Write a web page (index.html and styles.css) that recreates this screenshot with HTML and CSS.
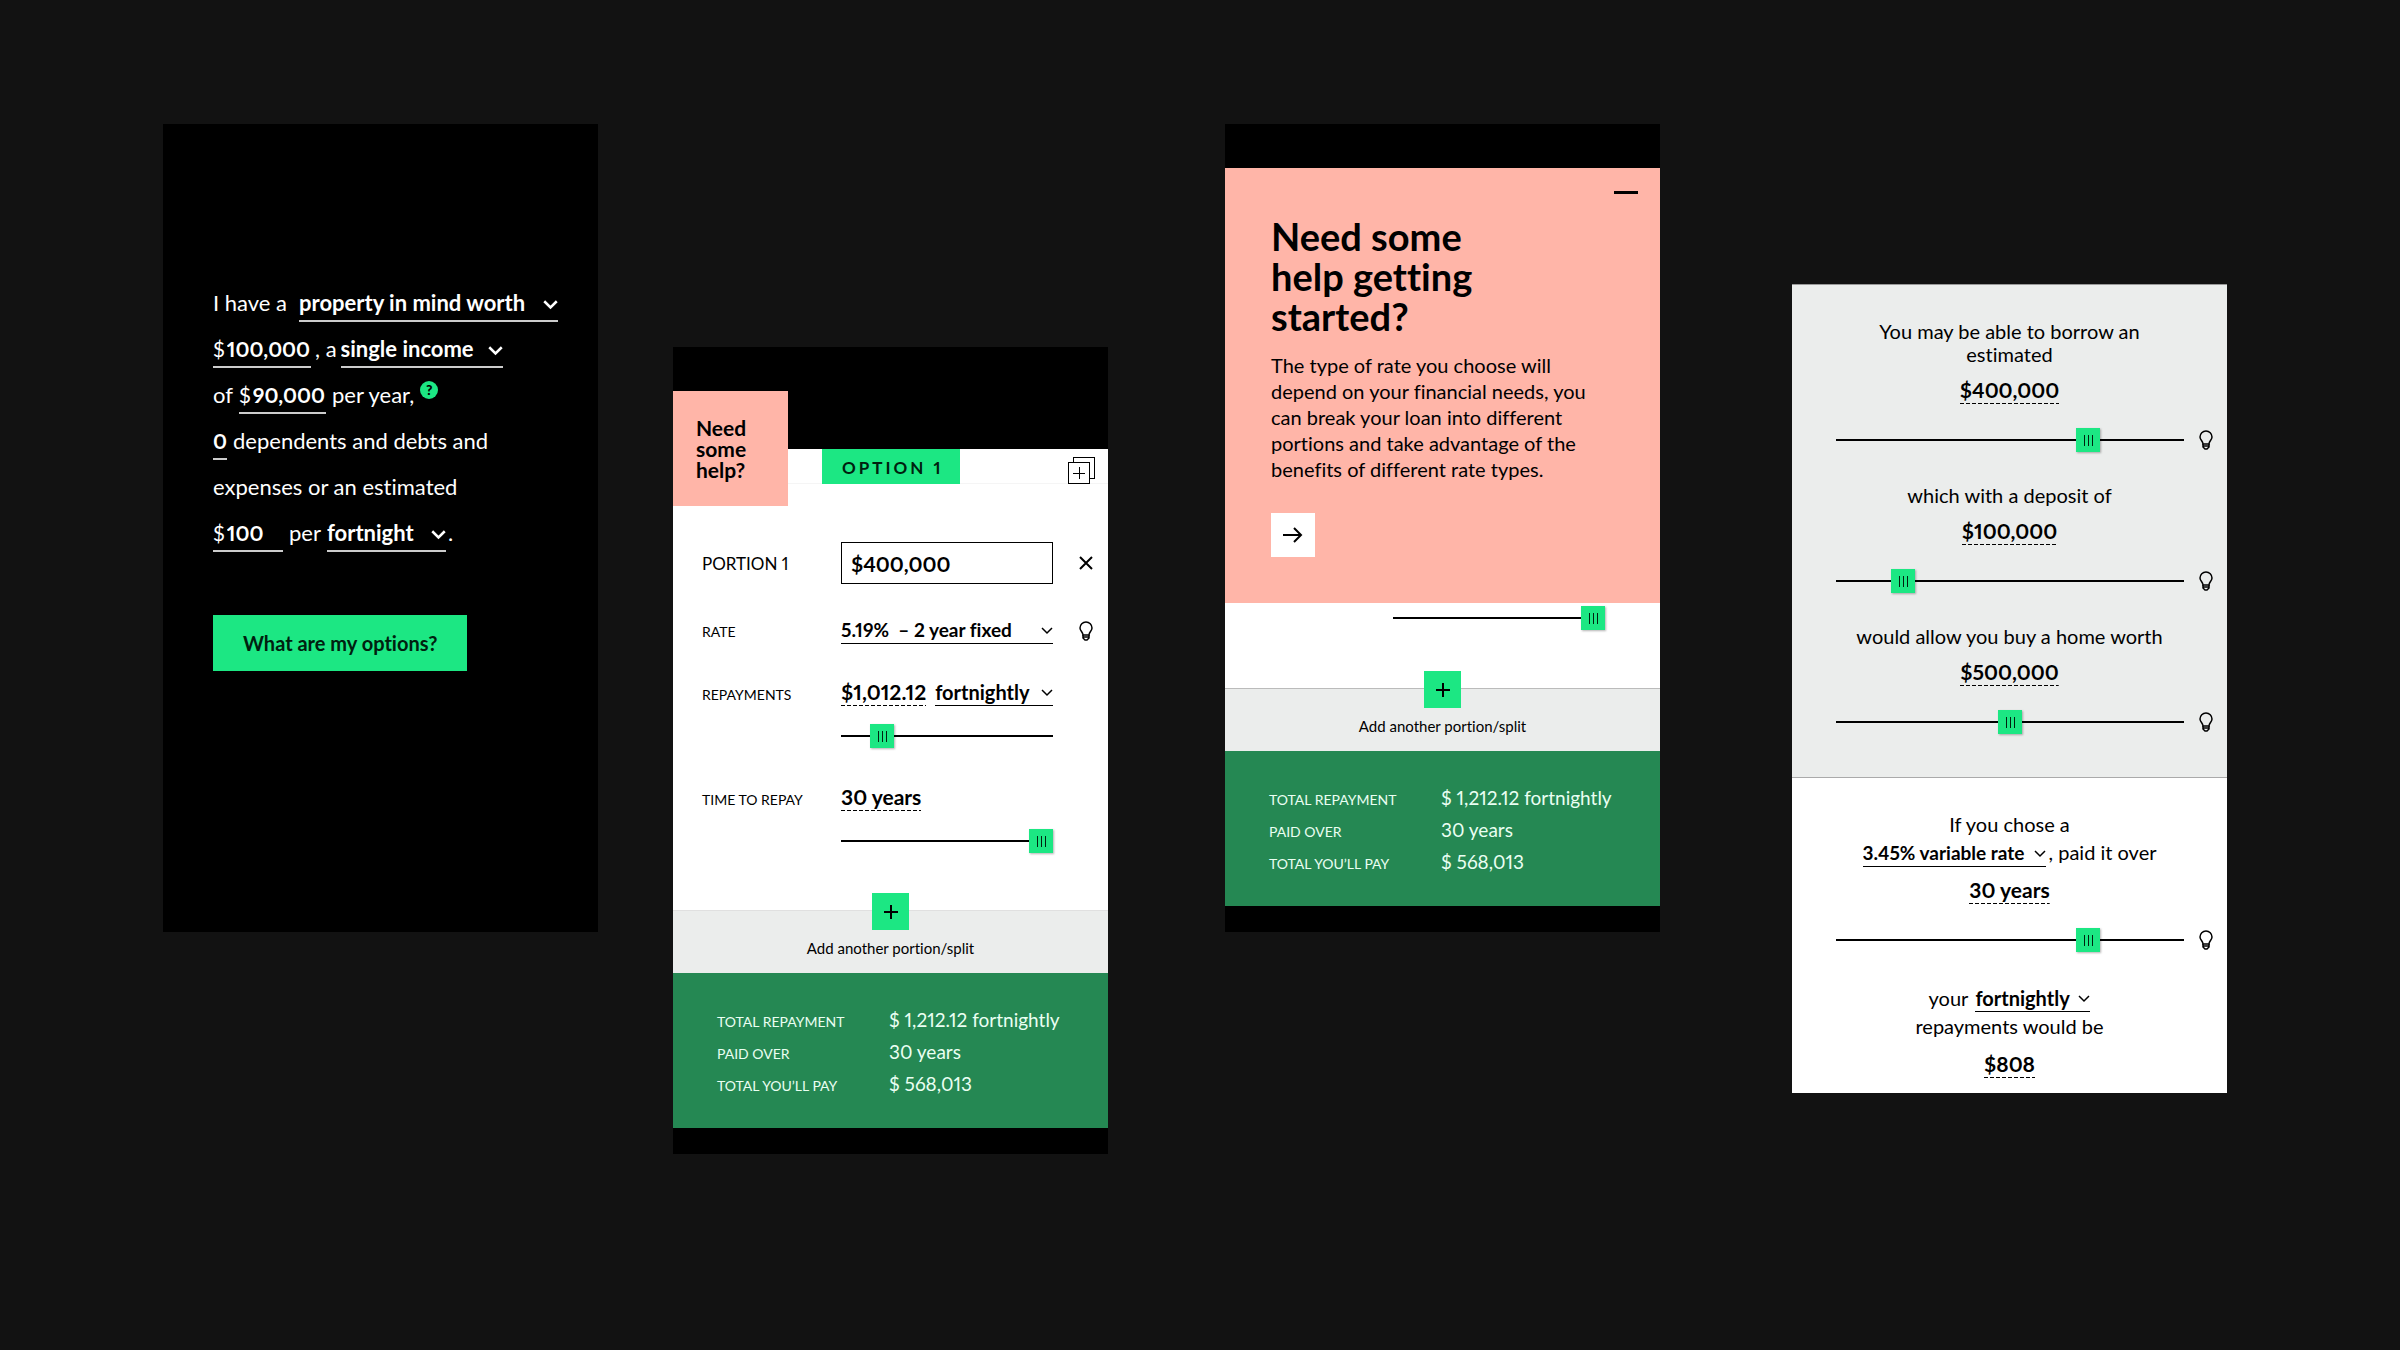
FILE: index.html
```html
<!DOCTYPE html>
<html lang="en">
<head>
    <title>Home loan calculator</title>
    <meta charset="utf-8">
    <meta name="viewport" content="width=device-width, initial-scale=1">
    <link rel="stylesheet" href="styles.css">
</head>
<body>
    <!-- shared icons -->
    <svg class="sprite" aria-hidden="true">
        <symbol id="chevron" viewBox="0 0 12 8"><path d="M1 1l5 5 5-5"/></symbol>
        <symbol id="bulb" viewBox="0 0 14 20">
            <path d="M4 14c0-3-3-4-3-7a6 6 0 0 1 12 0c0 3-3 4-3 7z"/>
            <path d="M4 16h6M4 14v3l2 2h2l2-2v-3"/>
        </symbol>
        <symbol id="plus" viewBox="0 0 16 16"><path d="M8 1v14M1 8h14"/></symbol>
    </svg>

    <main class="board">
        <form class="phone intro">
            <div class="line">
                <label for="goal">I have a</label>
                <span class="pick goal">
                    <select id="goal"><option>property in mind worth</option></select>
                    <svg class="chevron"><use href="#chevron"/></svg>
                </span>
            </div>
            <div class="line tight">
                <label class="money worth">$<input type="text" value="100,000" aria-label="Property value"></label>
                <label for="income">, a</label>
                <span class="pick income">
                    <select id="income"><option>single income</option></select>
                    <svg class="chevron"><use href="#chevron"/></svg>
                </span>
            </div>
            <div class="line">
                <span>of</span>
                <label class="money salary">$<input type="text" value="90,000" aria-label="Income"></label>
                <span>per year,</span>
                <button type="button" class="hint" aria-label="Help">?</button>
            </div>
            <div class="line">
                <input class="count" id="dependents" type="text" value="0">
                <label for="dependents">dependents and debts and</label>
            </div>
            <div class="line">expenses or an estimated</div>
            <div class="line">
                <label class="money spend">$<input type="text" value="100" aria-label="Expenses"></label>
                <label for="period">per</label>
                <span class="pick period">
                    <select id="period"><option>fortnight</option></select>
                    <svg class="chevron"><use href="#chevron"/></svg>
                </span>
                <span class="stop">.</span>
            </div>
            <button type="button" class="submit">What are my options?</button>
        </form>

        <section class="phone option">
            <button type="button" class="help-tab">Need<br>some<br>help?</button>
            <header class="option-bar">
                <h2>OPTION 1</h2>
                <button type="button" class="icon-button" aria-label="Duplicate option">
                    <svg class="copy" viewBox="0 0 28 28"><path d="M6 6V1h21v21h-5M1 6h21v21H1zM12 11v12M6 17h12"/></svg>
                </button>
            </header>
            <form class="fields">
                <div class="row portion">
                    <label for="portion">PORTION 1</label>
                    <input id="portion" type="text" value="$400,000">
                    <button type="button" class="icon-button" aria-label="Remove portion">
                        <svg class="cross" viewBox="0 0 14 14"><path d="M1 1l12 12M13 1L1 13"/></svg>
                    </button>
                </div>
                <div class="row rate">
                    <label for="rate">RATE</label>
                    <span class="pick">
                        <select id="rate"><option>5.19% &nbsp;– 2 year fixed</option></select>
                        <svg class="chevron"><use href="#chevron"/></svg>
                    </span>
                    <button type="button" class="icon-button" aria-label="Rate tip"><svg class="bulb"><use href="#bulb"/></svg></button>
                </div>
                <div class="row">
                    <label for="repay-range">REPAYMENTS</label>
                    <div class="pair">
                        <output class="amount" for="repay-range">$1,012.12</output>
                        <span class="pick">
                            <select aria-label="Repayment frequency"><option>fortnightly</option></select>
                            <svg class="chevron"><use href="#chevron"/></svg>
                        </span>
                    </div>
                    <input class="range" id="repay-range" type="range" min="0" max="200" value="31">
                </div>
                <div class="row">
                    <label for="time-range">TIME TO REPAY</label>
                    <div class="pair"><output class="amount" for="time-range">30 years</output></div>
                    <input class="range" id="time-range" type="range" min="0" max="100" value="100">
                </div>
            </form>
            <div class="add">
                <button type="button" id="add-a" aria-label="Add"><svg><use href="#plus"/></svg></button>
                <label for="add-a">Add another portion/split</label>
            </div>
            <dl class="totals">
                <dt>TOTAL REPAYMENT</dt><dd>$ 1,212.12 fortnightly</dd>
                <dt>PAID OVER</dt><dd>30 years</dd>
                <dt>TOTAL YOU’LL PAY</dt><dd>$ 568,013</dd>
            </dl>
        </section>

        <section class="phone help">
            <div class="help-card">
                <button type="button" class="minimise" aria-label="Minimise"></button>
                <h1>Need some<br>help getting<br>started?</h1>
                <p>The type of rate you choose will<br>depend on your financial needs, you<br>can break your loan into different<br>portions and take advantage of the<br>benefits of different rate types.</p>
                <button type="button" class="next" aria-label="Next">
                    <svg viewBox="0 0 20 16"><path d="M0 8h18M11 1l7 7-7 7"/></svg>
                </button>
            </div>
            <div class="peek">
                <input class="range" type="range" min="0" max="100" value="100" aria-label="Time to repay">
            </div>
            <div class="add ruled">
                <button type="button" id="add-b" aria-label="Add"><svg><use href="#plus"/></svg></button>
                <label for="add-b">Add another portion/split</label>
            </div>
            <dl class="totals">
                <dt>TOTAL REPAYMENT</dt><dd>$ 1,212.12 fortnightly</dd>
                <dt>PAID OVER</dt><dd>30 years</dd>
                <dt>TOTAL YOU’LL PAY</dt><dd>$ 568,013</dd>
            </dl>
        </section>

        <section class="phone estimate">
            <div class="borrow">
                <label class="text" for="loan">You may be able to borrow an<br>estimated</label>
                <output class="amount" for="loan">$400,000</output>
                <div class="slider">
                    <input class="range" id="loan" type="range" min="0" max="100" value="74">
                    <button type="button" class="icon-button" aria-label="Tip"><svg class="bulb"><use href="#bulb"/></svg></button>
                </div>
                <label class="text" for="deposit">which with a deposit of</label>
                <output class="amount" for="deposit">$100,000</output>
                <div class="slider">
                    <input class="range" id="deposit" type="range" min="0" max="100" value="17">
                    <button type="button" class="icon-button" aria-label="Tip"><svg class="bulb"><use href="#bulb"/></svg></button>
                </div>
                <label class="text" for="home">would allow you buy a home worth</label>
                <output class="amount" for="home">$500,000</output>
                <div class="slider">
                    <input class="range" id="home" type="range" min="0" max="100" value="50">
                    <button type="button" class="icon-button" aria-label="Tip"><svg class="bulb"><use href="#bulb"/></svg></button>
                </div>
            </div>
            <div class="repay">
                <div class="text">
                    <div class="inline">If you chose a</div>
                    <div class="inline">
                        <span class="pick variable">
                            <select aria-label="Rate"><option>3.45% variable rate</option></select>
                            <svg class="chevron"><use href="#chevron"/></svg>
                        </span>
                        <label for="term">, paid it over</label>
                    </div>
                </div>
                <output class="amount" for="term">30 years</output>
                <div class="slider">
                    <input class="range" id="term" type="range" min="0" max="100" value="74">
                    <button type="button" class="icon-button" aria-label="Tip"><svg class="bulb"><use href="#bulb"/></svg></button>
                </div>
                <div class="text">
                    <div class="inline your">
                        <label for="frequency">your</label>
                        <span class="pick frequency">
                            <select id="frequency"><option>fortnightly</option></select>
                            <svg class="chevron"><use href="#chevron"/></svg>
                        </span>
                    </div>
                    <div class="inline">repayments would be</div>
                </div>
                <output class="amount">$808</output>
            </div>
        </section>
    </main>
</body>
</html>
```
FILE: styles.css
```css
* {
    box-sizing: border-box;
}
body {
    margin: 0;
    min-height: 100vh;
    background-color: #121212;
    color: #000;
    font-family: Lato, "Open Sans", sans-serif;
    font-size: 20px;
    font-variant-ligatures: none;
    font-variant-numeric: proportional-nums;
}
h1, h2, p, dl, dd {
    margin: 0;
}
button, input, select {
    margin: 0;
    padding: 0;
    border: 0;
    border-radius: 0;
    background: none;
    color: inherit;
    font: inherit;
    font-variant-ligatures: none;
    font-variant-numeric: proportional-nums;
}
button {
    cursor: pointer;
}
svg {
    display: block;
    fill: none;
    stroke: currentColor;
}
.sprite {
    position: absolute;
    width: 0;
    height: 0;
}

/* the four screens, with uneven gutters between them */
.board {
    display: grid;
    grid-template-columns: 163fr 435fr 75fr 435fr 117fr 435fr 132fr 435fr 173fr;
    align-items: start;
    padding: 124px 0;
}
.phone {
    position: relative;
    min-width: 0;
    background-color: #000;
}
.intro {
    grid-column: 2;
    min-height: 808px;
    padding: 156px 0 0 50px;
    color: #fff;
    font-size: 22px;
}
.option {
    grid-column: 4;
    margin-top: 223px;
    padding: 102px 0 26px;
}
.help {
    grid-column: 6;
    padding: 44px 0 26px;
}
.estimate {
    grid-column: 8;
    margin-top: 160px;
}

/* selects */
.pick {
    position: relative;
    display: inline-block;
    border-bottom: 1px solid;
    font-weight: 700;
}
.pick select {
    display: block;
    width: 100%;
    line-height: 26px;
    appearance: none;
}
.pick option {
    color: #000;
}
.chevron {
    position: absolute;
    right: 0;
    top: 10px;
    width: 12px;
    height: 8px;
    stroke-width: 1.5;
    pointer-events: none;
}

/* sentence form */
.line {
    display: flex;
    align-items: baseline;
    gap: 6px;
    height: 46px;
    line-height: 46px;
    white-space: nowrap;
}
.tight {
    gap: 4px;
}
.line .pick, .money, .count {
    border-bottom: 2px solid #ccc;
    line-height: 26px;
    padding-bottom: 4px;
}
.line .chevron {
    width: 15px;
    height: 10px;
    stroke-width: 2;
}
.goal {
    width: 259px;
    margin-left: 6px;
}
.income {
    width: 162px;
}
.period {
    width: 119px;
}
.money {
    display: flex;
    gap: 2px;
}
.money, .money input, .count {
    font-size: 21px;
}
.money input, .count {
    width: 100%;
    min-width: 0;
    font-weight: 700;
}
.worth {
    width: 98px;
}
.salary {
    width: 87px;
}
.spend {
    width: 70px;
}
.line .count {
    width: 14px;
}
.stop {
    margin-left: -4px;
}
.hint {
    align-self: flex-start;
    width: 18px;
    height: 18px;
    margin-top: 9px;
    border-radius: 50%;
    background-color: #1ce783;
    color: #000;
    font-size: 14px;
    font-weight: 900;
    line-height: 18px;
}
.submit {
    height: 56px;
    margin-top: 59px;
    padding: 0 30px;
    background-color: #1ce783;
    color: #00210f;
    font-size: 20px;
    font-weight: 700;
}

/* option screen */
.help-tab {
    position: absolute;
    left: 0;
    top: 44px;
    width: 115px;
    height: 115px;
    padding-left: 23px;
    background-color: #ffb5a8;
    font-size: 21px;
    font-weight: 700;
    line-height: 21px;
    text-align: left;
}
.option-bar {
    display: flex;
    justify-content: space-between;
    align-items: flex-end;
    height: 35px;
    padding: 0 13px 0 149px;
    background-color: #fff;
    border-bottom: 1px solid #f5f5f5;
}
.option-bar h2 {
    height: 35px;
    margin-bottom: -1px;
    padding: 0 17px 0 20px;
    background-color: #1ce783;
    color: #00210f;
    font-size: 17px;
    font-weight: 700;
    letter-spacing: 3px;
    line-height: 37px;
}
.copy {
    width: 28px;
    height: 28px;
    margin-bottom: -1px;
    shape-rendering: crispEdges;
}
.cross {
    width: 14px;
    height: 14px;
    stroke-width: 2;
}
.bulb {
    width: 14px;
    height: 20px;
    stroke-width: 1.5;
}
.fields {
    display: grid;
    gap: 33px;
    padding: 58px 15px 56px 29px;
    background-color: #fff;
}
.row {
    display: grid;
    grid-template-columns: 139px 1fr 40px;
    align-items: baseline;
    font-size: 14px;
}
.row .icon-button {
    justify-self: end;
    align-self: center;
}
.portion {
    align-items: center;
    font-size: 17px;
}
.portion input {
    width: 100%;
    height: 42px;
    padding-left: 9px;
    border: 1px solid #000;
    font-size: 21px;
    font-weight: 700;
}
.rate .pick {
    font-size: 19px;
}
.pair {
    display: flex;
    align-items: baseline;
    gap: 9px;
}
.pair .pick {
    flex: 1;
    font-size: 20px;
}
.amount {
    display: block;
    padding-top: 1px;
    font-size: 21px;
    font-weight: 700;
    line-height: 28px;
    background: repeating-linear-gradient(90deg, #000 0 4px, transparent 4px 6px) bottom / 100% 1px no-repeat;
}
.row .range {
    grid-column: 2;
    margin-top: 17px;
}

/* sliders */
.range {
    display: block;
    width: 100%;
    height: 26px;
    appearance: none;
    background: linear-gradient(#000, #000) center / 100% 2px no-repeat;
}
.range::-webkit-slider-thumb {
    appearance: none;
    width: 24px;
    height: 24px;
    background:
        linear-gradient(#00210f, #00210f) 8px 7px / 1px 11px no-repeat,
        linear-gradient(#00210f, #00210f) 12px 7px / 1px 11px no-repeat,
        linear-gradient(#00210f, #00210f) 16px 7px / 1px 11px no-repeat,
        #1ce783;
    box-shadow: 1px 1px 2px rgba(0, 0, 0, .3);
}

/* add portion strip */
.add {
    display: flex;
    flex-direction: column;
    align-items: center;
    height: 63px;
    background-color: #ebedec;
    border-top: 1px solid #e0e0e0;
    font-size: 15px;
}
.ruled {
    border-color: #bbb;
}
.add button {
    display: grid;
    place-items: center;
    width: 37px;
    height: 37px;
    margin: -18px 0 9px;
    background-color: #1ce783;
}
.add svg {
    width: 16px;
    height: 16px;
    stroke-width: 2;
}
.totals {
    display: grid;
    grid-template-columns: 172px 1fr;
    align-items: baseline;
    row-gap: 6px;
    padding: 34px 0 31px 44px;
    background-color: #258853;
    color: #eafff2;
    font-size: 14px;
    white-space: nowrap;
}
.totals dd {
    font-size: 19px;
    line-height: 26px;
}

/* help screen */
.help-card {
    position: relative;
    padding: 48px 46px 46px;
    background-color: #ffb5a8;
}
.help-card h1 {
    font-size: 38px;
    line-height: 40px;
}
.help-card p {
    margin: 16px 0 31px;
    line-height: 26px;
    white-space: nowrap;
}
.minimise {
    position: absolute;
    right: 22px;
    top: 14px;
    width: 24px;
    height: 21px;
    background: linear-gradient(#000, #000) center / 100% 3px no-repeat;
}
.next {
    display: grid;
    place-items: center;
    width: 44px;
    height: 44px;
    background-color: #fff;
}
.next svg {
    width: 20px;
    height: 16px;
    stroke-width: 2;
}
.peek {
    padding: 2px 55px 57px 168px;
    background-color: #fff;
}

/* estimate screen */
.borrow, .repay {
    display: flex;
    flex-direction: column;
    align-items: center;
    text-align: center;
}
.borrow {
    padding: 35px 0 42px;
    background-color: #ebedec;
    border-top: 1px solid #999;
    border-bottom: 1px solid #aaa;
    line-height: 23px;
}
.repay {
    padding: 32px 0 15px;
    background-color: #fff;
    line-height: 28px;
}
.estimate .amount {
    margin-top: 9px;
}
.inline {
    display: flex;
    align-items: baseline;
    justify-content: center;
    gap: 3px;
    height: 28px;
}
.your {
    gap: 7px;
}
.variable {
    width: 183px;
    font-size: 19px;
}
.frequency {
    width: 115px;
}
.slider {
    display: flex;
    align-items: center;
    align-self: stretch;
    gap: 15px;
    margin: 23px 14px 31px 44px;
}
.borrow .slider:last-child {
    margin-bottom: 0;
}
```
